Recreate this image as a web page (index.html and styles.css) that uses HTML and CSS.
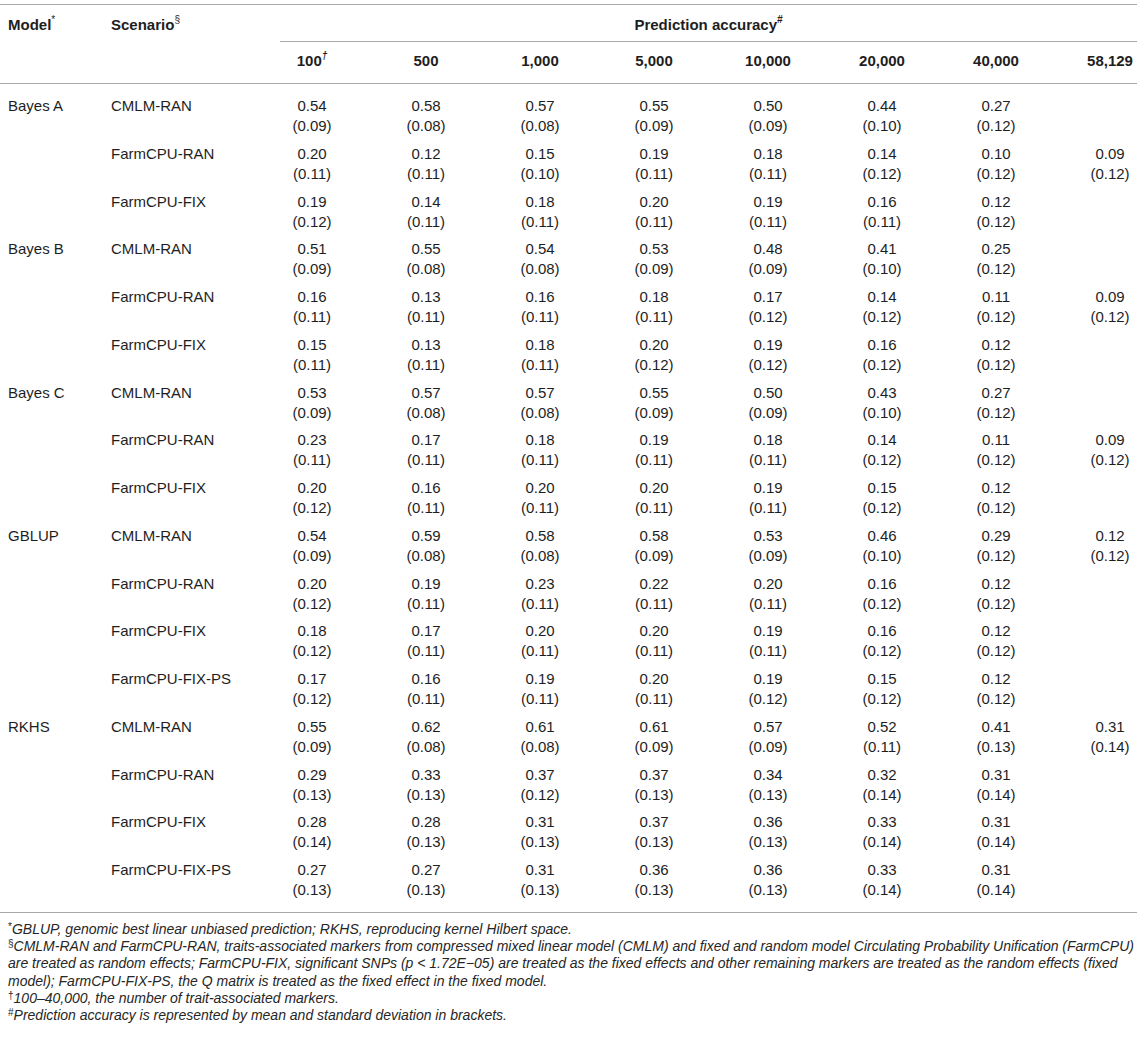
FILE: index.html
```html
<!DOCTYPE html>
<html>
<head>
<meta charset="utf-8">
<link rel="stylesheet" href="styles.css">
</head>
<body>
<table class="tbl">
<colgroup>
<col class="c-model"><col class="c-scen">
<col class="c-d"><col class="c-d"><col class="c-d"><col class="c-d"><col class="c-d"><col class="c-d"><col class="c-d"><col class="c-last">
</colgroup>
<thead>
<tr>
<th class="h-left" rowspan="2">Model<sup class="mk">*</sup></th>
<th class="h-left" rowspan="2">Scenario<sup class="mk">§</sup></th>
<th class="h-span" colspan="8"><div class="pa">Prediction accuracy<sup class="mk it">#</sup></div></th>
</tr>
<tr class="h2">
<th>100<sup class="mk it">†</sup></th><th>500</th><th>1,000</th><th>5,000</th><th>10,000</th><th>20,000</th><th>40,000</th><th class="last">58,129</th>
</tr>
</thead>
<tbody>
<tr class="first"><td class="m">Bayes A</td><td class="s">CMLM-RAN</td><td>0.54<br>(0.09)</td><td>0.58<br>(0.08)</td><td>0.57<br>(0.08)</td><td>0.55<br>(0.09)</td><td>0.50<br>(0.09)</td><td>0.44<br>(0.10)</td><td>0.27<br>(0.12)</td><td class="last"></td></tr>
<tr><td class="m"></td><td class="s">FarmCPU-RAN</td><td>0.20<br>(0.11)</td><td>0.12<br>(0.11)</td><td>0.15<br>(0.10)</td><td>0.19<br>(0.11)</td><td>0.18<br>(0.11)</td><td>0.14<br>(0.12)</td><td>0.10<br>(0.12)</td><td class="last">0.09<br>(0.12)</td></tr>
<tr><td class="m"></td><td class="s">FarmCPU-FIX</td><td>0.19<br>(0.12)</td><td>0.14<br>(0.11)</td><td>0.18<br>(0.11)</td><td>0.20<br>(0.11)</td><td>0.19<br>(0.11)</td><td>0.16<br>(0.11)</td><td>0.12<br>(0.12)</td><td class="last"></td></tr>
<tr><td class="m">Bayes B</td><td class="s">CMLM-RAN</td><td>0.51<br>(0.09)</td><td>0.55<br>(0.08)</td><td>0.54<br>(0.08)</td><td>0.53<br>(0.09)</td><td>0.48<br>(0.09)</td><td>0.41<br>(0.10)</td><td>0.25<br>(0.12)</td><td class="last"></td></tr>
<tr><td class="m"></td><td class="s">FarmCPU-RAN</td><td>0.16<br>(0.11)</td><td>0.13<br>(0.11)</td><td>0.16<br>(0.11)</td><td>0.18<br>(0.11)</td><td>0.17<br>(0.12)</td><td>0.14<br>(0.12)</td><td>0.11<br>(0.12)</td><td class="last">0.09<br>(0.12)</td></tr>
<tr><td class="m"></td><td class="s">FarmCPU-FIX</td><td>0.15<br>(0.11)</td><td>0.13<br>(0.11)</td><td>0.18<br>(0.11)</td><td>0.20<br>(0.12)</td><td>0.19<br>(0.12)</td><td>0.16<br>(0.12)</td><td>0.12<br>(0.12)</td><td class="last"></td></tr>
<tr><td class="m">Bayes C</td><td class="s">CMLM-RAN</td><td>0.53<br>(0.09)</td><td>0.57<br>(0.08)</td><td>0.57<br>(0.08)</td><td>0.55<br>(0.09)</td><td>0.50<br>(0.09)</td><td>0.43<br>(0.10)</td><td>0.27<br>(0.12)</td><td class="last"></td></tr>
<tr><td class="m"></td><td class="s">FarmCPU-RAN</td><td>0.23<br>(0.11)</td><td>0.17<br>(0.11)</td><td>0.18<br>(0.11)</td><td>0.19<br>(0.11)</td><td>0.18<br>(0.11)</td><td>0.14<br>(0.12)</td><td>0.11<br>(0.12)</td><td class="last">0.09<br>(0.12)</td></tr>
<tr><td class="m"></td><td class="s">FarmCPU-FIX</td><td>0.20<br>(0.12)</td><td>0.16<br>(0.11)</td><td>0.20<br>(0.11)</td><td>0.20<br>(0.11)</td><td>0.19<br>(0.11)</td><td>0.15<br>(0.12)</td><td>0.12<br>(0.12)</td><td class="last"></td></tr>
<tr><td class="m">GBLUP</td><td class="s">CMLM-RAN</td><td>0.54<br>(0.09)</td><td>0.59<br>(0.08)</td><td>0.58<br>(0.08)</td><td>0.58<br>(0.09)</td><td>0.53<br>(0.09)</td><td>0.46<br>(0.10)</td><td>0.29<br>(0.12)</td><td class="last">0.12<br>(0.12)</td></tr>
<tr><td class="m"></td><td class="s">FarmCPU-RAN</td><td>0.20<br>(0.12)</td><td>0.19<br>(0.11)</td><td>0.23<br>(0.11)</td><td>0.22<br>(0.11)</td><td>0.20<br>(0.11)</td><td>0.16<br>(0.12)</td><td>0.12<br>(0.12)</td><td class="last"></td></tr>
<tr><td class="m"></td><td class="s">FarmCPU-FIX</td><td>0.18<br>(0.12)</td><td>0.17<br>(0.11)</td><td>0.20<br>(0.11)</td><td>0.20<br>(0.11)</td><td>0.19<br>(0.11)</td><td>0.16<br>(0.12)</td><td>0.12<br>(0.12)</td><td class="last"></td></tr>
<tr><td class="m"></td><td class="s">FarmCPU-FIX-PS</td><td>0.17<br>(0.12)</td><td>0.16<br>(0.11)</td><td>0.19<br>(0.11)</td><td>0.20<br>(0.11)</td><td>0.19<br>(0.12)</td><td>0.15<br>(0.12)</td><td>0.12<br>(0.12)</td><td class="last"></td></tr>
<tr><td class="m">RKHS</td><td class="s">CMLM-RAN</td><td>0.55<br>(0.09)</td><td>0.62<br>(0.08)</td><td>0.61<br>(0.08)</td><td>0.61<br>(0.09)</td><td>0.57<br>(0.09)</td><td>0.52<br>(0.11)</td><td>0.41<br>(0.13)</td><td class="last">0.31<br>(0.14)</td></tr>
<tr><td class="m"></td><td class="s">FarmCPU-RAN</td><td>0.29<br>(0.13)</td><td>0.33<br>(0.13)</td><td>0.37<br>(0.12)</td><td>0.37<br>(0.13)</td><td>0.34<br>(0.13)</td><td>0.32<br>(0.14)</td><td>0.31<br>(0.14)</td><td class="last"></td></tr>
<tr><td class="m"></td><td class="s">FarmCPU-FIX</td><td>0.28<br>(0.14)</td><td>0.28<br>(0.13)</td><td>0.31<br>(0.13)</td><td>0.37<br>(0.13)</td><td>0.36<br>(0.13)</td><td>0.33<br>(0.14)</td><td>0.31<br>(0.14)</td><td class="last"></td></tr>
<tr class="final"><td class="m"></td><td class="s">FarmCPU-FIX-PS</td><td>0.27<br>(0.13)</td><td>0.27<br>(0.13)</td><td>0.31<br>(0.13)</td><td>0.36<br>(0.13)</td><td>0.36<br>(0.13)</td><td>0.33<br>(0.14)</td><td>0.31<br>(0.14)</td><td class="last"></td></tr>
</tbody>
</table>
<div class="notes">
<p><sup class="fm">*</sup>GBLUP, genomic best linear unbiased prediction; RKHS, reproducing kernel Hilbert space.</p>
<p><sup class="fm">§</sup>CMLM-RAN and FarmCPU-RAN, traits-associated markers from compressed mixed linear model (CMLM) and fixed and random model Circulating Probability Unification (FarmCPU) are treated as random effects; FarmCPU-FIX, significant SNPs (p &lt; 1.72E−05) are treated as the fixed effects and other remaining markers are treated as the random effects (fixed model); FarmCPU-FIX-PS, the Q matrix is treated as the fixed effect in the fixed model.</p>
<p><sup class="fm">†</sup>100–40,000, the number of trait-associated markers.</p>
<p><sup class="fm">#</sup>Prediction accuracy is represented by mean and standard deviation in brackets.</p>
</div>
</body>
</html>
```
FILE: styles.css
```css
html, body {
  margin: 0;
  padding: 0;
  background: #ffffff;
}
body {
  font-family: "Liberation Sans", Arial, Helvetica, sans-serif;
  color: #1e1e1e;
}
.tbl {
  margin-top: 4px;
  width: 1137px;
  border-collapse: collapse;
  table-layout: fixed;
  border-top: 1px solid #a8a8a8;
  font-size: 15px;
  line-height: 20px;
}
.c-model { width: 103px; }
.c-scen { width: 152px; }
.c-d { width: 114px; }
.c-last { width: 84px; }

th {
  font-weight: bold;
  padding: 0;
  line-height: 19px;
}
.h-left {
  text-align: left;
  vertical-align: top;
  padding: 10px 0 0 8px;
  border-bottom: 1px solid #a8a8a8;
}
.h-span {
  padding: 0;
  vertical-align: top;
}
.pa {
  margin-left: 25px;
  text-align: center;
  padding: 10px 0 7px 0;
  border-bottom: 1px solid #a8a8a8;
}
.h2 th {
  text-align: center;
  padding: 9px 0 13px 0;
  border-bottom: 1px solid #a8a8a8;
}
.h2 th.last,
td.last {
  padding-left: 30px;
}
.mk {
  font-size: 10px;
  line-height: 1;
  vertical-align: top;
  font-weight: normal;
}
.mk.it {
  font-style: italic;
  font-weight: bold;
}
td {
  text-align: center;
  vertical-align: top;
  padding: 4px 0 3.75px 0;
}
td.m, td.s {
  text-align: left;
  padding-left: 8px;
}
tr.first td { padding-top: 12px; }
tr.final td { padding-bottom: 12px; }
tbody tr.final td { border-bottom: 1px solid #a8a8a8; }

.notes {
  width: 1145px;
  padding: 8px 4px 0 8px;
  box-sizing: border-box;
  font-size: 14px;
  line-height: 17.2px;
  font-style: italic;
  color: #262626;
}
.notes p {
  margin: 0;
}
.fm {
  font-size: 10px;
  line-height: 12px;
  vertical-align: top;
  font-style: normal;
}
```
